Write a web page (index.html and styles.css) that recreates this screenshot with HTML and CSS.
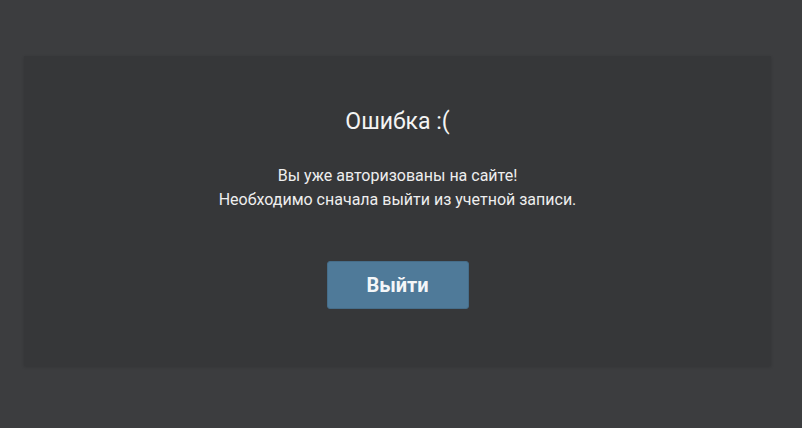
FILE: index.html
```html
<!DOCTYPE html>
<html lang="ru">
<head>
  <meta charset="UTF-8">
  <meta name="viewport" content="width=device-width, initial-scale=1.0">
  <title>Ошибка</title>
  <link rel="stylesheet" href="styles.css">
</head>
<body>

  <div class="page">
    <!-- Блок ошибки -->
    <div class="error-box">
      <h1 class="error-title">Ошибка :(</h1>
      <p class="error-text">
        Вы уже авторизованы на сайте!<br>
        Необходимо сначала выйти из учетной записи.
      </p>
      <button class="logout-btn" type="button">Выйти</button>
    </div>
  </div>

</body>
</html>
```

FILE: styles.css
```css
html, body {
  margin: 0;
  padding: 0;
  height: 100%;
}

body {
  font-family: Roboto, "Noto Sans", Arial, sans-serif;
  background-color: #3c3d3f;
  color: #f0f0f0;
}

.page {
  padding: 56px 31px 0 24px;
}

.error-box {
  background-color: #363739;
  box-shadow: 0 1px 3px rgba(0, 0, 0, 0.15);
  height: 310px;
  box-sizing: border-box;
  padding-top: 51px;
  display: flex;
  flex-direction: column;
  align-items: center;
}

.error-title {
  margin: 0;
  font-size: 23px;
  font-weight: 400;
  line-height: 30px;
  color: #f4f4f4;
}

.error-text {
  margin: 27px 0 0;
  font-size: 16px;
  line-height: 24px;
  text-align: center;
  color: #eeeeee;
}

.logout-btn {
  margin-top: 49px;
  width: 142px;
  height: 48px;
  background-color: #4f7a99;
  border: 1px solid #466d89;
  border-radius: 3px;
  color: #f4f6f8;
  font-family: Roboto, "Noto Sans", Arial, sans-serif;
  font-size: 20px;
  font-weight: 700;
  cursor: pointer;
}

.logout-btn:hover {
  background-color: #56829f;
}
```
